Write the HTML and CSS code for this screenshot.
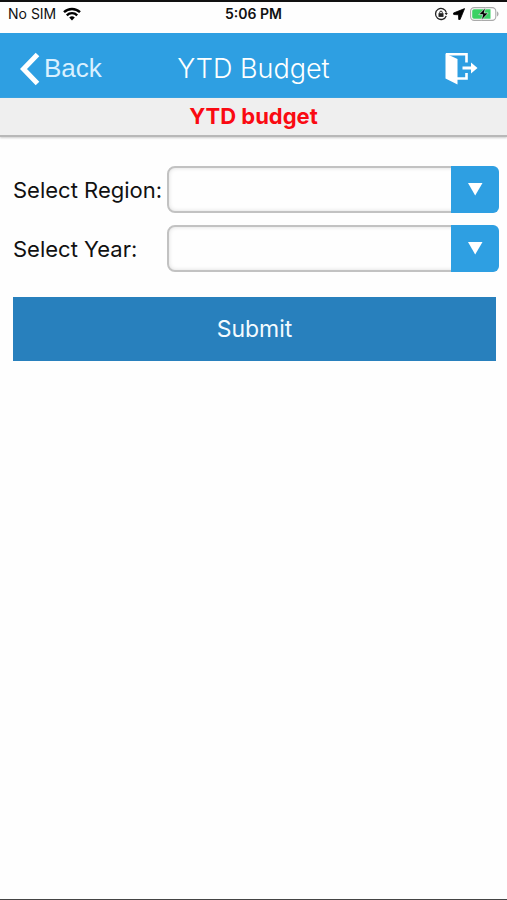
FILE: index.html
```html
<!DOCTYPE html>
<html lang="en">
<head>
  <meta charset="utf-8">
  <meta name="viewport" content="width=device-width, initial-scale=1">
  <title>YTD Budget</title>
  <link rel="stylesheet" href="styles.css">
</head>
<body>
  <div class="status">
    <div class="status-side">
      <span>No SIM</span>
      <svg width="18" height="14" viewBox="0 0 18 14" aria-hidden="true">
        <g fill="none" stroke="#000" stroke-width="2.4">
          <path d="M1 5.2a11.5 11.5 0 0 1 16 0"/>
          <path d="M3.8 8.3a7.4 7.4 0 0 1 10.4 0"/>
        </g>
        <path d="M9 13.4 6.2 10.6a4 4 0 0 1 5.6 0z"/>
      </svg>
    </div>
    <span class="clock">5:06 PM</span>
    <div class="status-side status-end">
      <svg width="14" height="14" viewBox="0 0 14 14" aria-hidden="true">
        <path d="M12.2 8.9a5.5 5.500 0 1 1 .2-3.2" fill="none" stroke="#222" stroke-width="1.3"/>
        <path d="M10.600 6h3.200l-1.500 2.300z" fill="#222"/>
        <path d="M5.700 6.500V5.400a1.300 1.300 0 0 1 2.600 0v1.100" fill="none" stroke="#222"/>
        <path d="M4.500 6.200h5v3.700h-5z" fill="#222"/>
      </svg>
      <svg width="12" height="12" viewBox="0 0 12 12" aria-hidden="true">
        <path d="M11.600.6.5 5l.2 1.500 4.800.3.200 4.700 1.300.2z" stroke="#000" stroke-width=".8" stroke-linejoin="round"/>
      </svg>
      <svg width="29" height="14" viewBox="0 0 29 14" aria-hidden="true">
        <rect x=".6" y=".6" width="25.2" height="12.8" rx="3.6" fill="#fff" stroke="#aaa" stroke-width="1.1"/>
        <path d="M4 2.200h16.500v9.600H4a1.800 1.800 0 0 1-1.800-1.800V4A1.800 1.800 0 0 1 4 2.200z" fill="#3bd164"/>
        <path d="M27 4.600c2 .6 2 4.200 0 4.800z" fill="#aaa"/>
        <path d="M15.400.8 8.800 7.600h4l-1.400 5.600 6.800-7.200h-4z" stroke="#fff" stroke-width=".6"/>
      </svg>
    </div>
  </div>

  <header class="navbar">
    <a class="back" href="#">
      <svg width="20" height="34" viewBox="0 0 20 34" aria-hidden="true">
        <path d="M17.500 2.500 3.500 17l14 14.500" fill="none" stroke="#fff" stroke-width="5"/>
      </svg>
      <span>Back</span>
    </a>
    <h1>YTD Budget</h1>
    <button class="logout" type="button" aria-label="Log out">
      <svg width="34" height="34" viewBox="0 0 34 34" aria-hidden="true">
        <path d="M.5 1.500 12.500 7v25.500L.5 26.500z" fill="#fff"/>
        <path d="M1 2.200h20.500v8.300M21.500 21v5.500H12" fill="none" stroke="#fff" stroke-width="2.600"/>
        <path d="M17.500 14.500h8.500v-4l6.500 5.500-6.500 5.500v-4h-8.500z" fill="#fff"/>
      </svg>
    </button>
  </header>

  <h2 class="subtitle">YTD budget</h2>

  <main>
    <form class="filters">
      <div class="field">
        <label for="region">Select Region:</label>
        <div class="picker">
          <select id="region"><option></option></select>
          <svg class="arrow" width="48" height="47" viewBox="0 0 48 47" aria-hidden="true"><path d="M17 17h14.500L24.200 29.500z" fill="#fff"/></svg>
        </div>
      </div>
      <div class="field">
        <label for="year">Select Year:</label>
        <div class="picker">
          <select id="year"><option></option></select>
          <svg class="arrow" width="48" height="47" viewBox="0 0 48 47" aria-hidden="true"><path d="M17 17h14.500L24.200 29.500z" fill="#fff"/></svg>
        </div>
      </div>
      <button class="submit" type="button">Submit</button>
    </form>
  </main>
</body>
</html>
```

FILE: styles.css
```css
* {
  box-sizing: border-box;
}

body {
  margin: 0;
  min-height: 100vh;
  border-top: 2px solid #111;
  border-bottom: 1px solid #444;
  background: #fefefe;
  color: #111;
  font-family: Inter, "Liberation Sans", sans-serif;
}

svg {
  display: block;
  flex: none;
}

.status {
  display: grid;
  grid-template-columns: 1fr auto 1fr;
  align-items: center;
  height: 31px;
  padding: 0 8px 8px;
  font-size: 14px;
}

.status-side {
  display: flex;
  align-items: center;
  gap: 7px;
}

.status-end {
  gap: 5px;
  justify-content: flex-end;
}

.clock {
  font-weight: 600;
}

.navbar {
  display: grid;
  grid-template-columns: 1fr auto 1fr;
  align-items: center;
  height: 65px;
  padding: 6px 20px 0;
  background: #2e9fe2;
  color: #fff;
}

.navbar h1 {
  margin: 0;
  font-size: 27px;
  font-weight: 300;
}

.back {
  display: flex;
  align-items: center;
  gap: 4px;
  color: #d9f0ff;
  font-family: "Liberation Sans", sans-serif;
  font-size: 26px;
  text-decoration: none;
}

.logout {
  justify-self: end;
  margin-right: 8px;
  padding: 0;
  border: 0;
  background: none;
}

.subtitle {
  height: 39px;
  margin: 0;
  border-bottom: 2px solid #b8b8b8;
  background: #efefef;
  box-shadow: 0 1px 2px #ccc;
  color: #fa0a12;
  font-size: 22px;
  font-weight: 700;
  line-height: 36px;
  text-align: center;
}

.filters {
  display: flex;
  flex-direction: column;
  gap: 12px;
  padding: 29px 8px 0 13px;
}

.field {
  display: grid;
  grid-template-columns: 154px 1fr;
  align-items: center;
  font-size: 22px;
}

.picker {
  position: relative;
}

.picker select {
  display: block;
  width: 100%;
  height: 47px;
  padding: 0 56px 0 12px;
  border: 2px solid #c2c2c2;
  border-radius: 8px;
  appearance: none;
  background: #fefefe;
  box-shadow: inset 0 0 4px #ddd;
  font: inherit;
}

.arrow {
  position: absolute;
  top: 0;
  right: 0;
  border-radius: 0 6px 6px 0;
  background: #2e9fe2;
  pointer-events: none;
}

.submit {
  height: 64px;
  margin: 13px 3px 0 0;
  border: 0;
  background: #2880bd;
  color: #f4fbff;
  font: inherit;
  font-size: 23px;
}
```
